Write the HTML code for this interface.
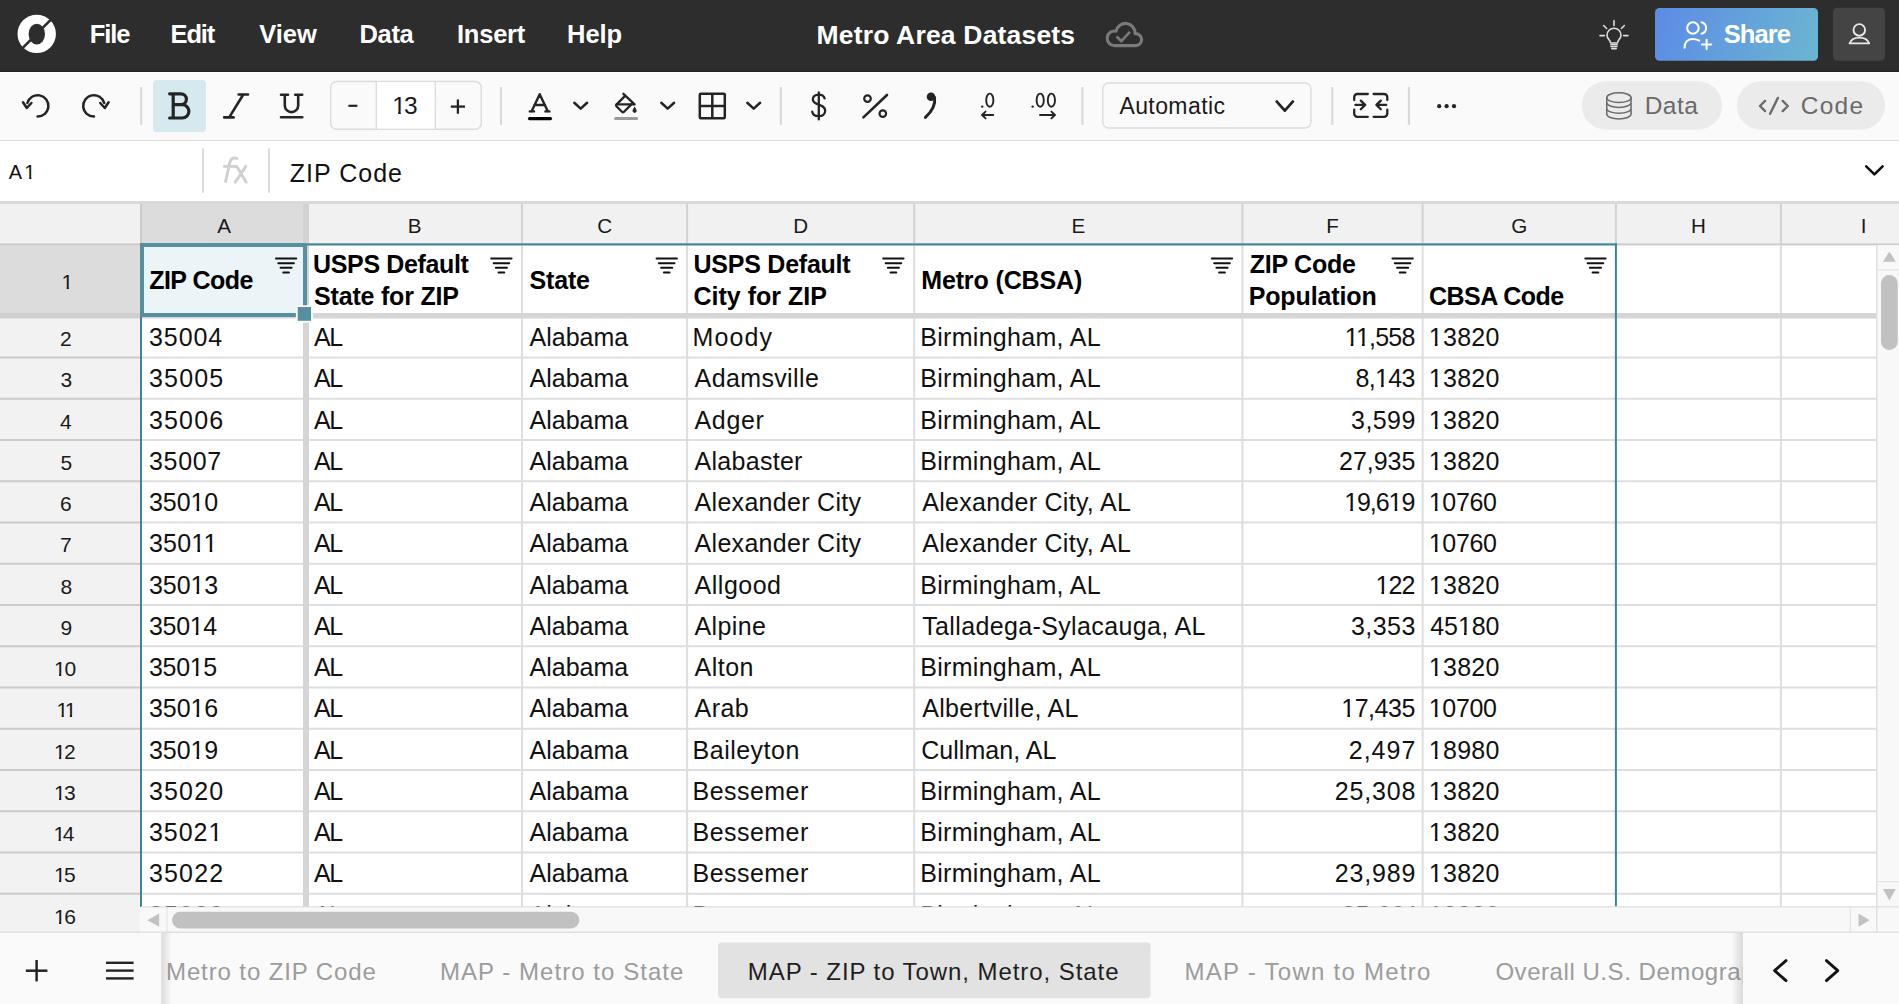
<!DOCTYPE html>
<html><head><meta charset="utf-8"><title>Metro Area Datasets</title>
<style>html,body{margin:0;padding:0;background:#fafafa;overflow:hidden;width:1899px;height:1004px}svg{display:block}text{font-family:"Liberation Sans",sans-serif}</style>
</head><body>
<svg width="1899" height="1004" viewBox="0 0 1899 1004" font-family="Liberation Sans, sans-serif"><rect x="0" y="0" width="1899" height="72" fill="#2d2d2d" />
<rect x="0" y="71" width="1899" height="1" fill="#202020" />
<g>
<circle cx="36.7" cy="33.9" r="19.2" fill="#fff"/>
<ellipse cx="36.8" cy="34.1" rx="8.2" ry="10.3" fill="#2d2d2d"/>
<line x1="19" y1="51.6" x2="54.4" y2="16.2" stroke="#2d2d2d" stroke-width="2.6"/>
</g>
<path d="M1114.5,45.6 A7.3,7.3 0 1 1 1116.12,31.18 A9.55,9.55 0 0 1 1135.03,33.63 A6,6 0 1 1 1135.6,45.6 Z" stroke="#7a7a7a" stroke-width="3.1" fill="none" stroke-linecap="round" stroke-linejoin="round" />
<path d="M1117.4,37.2 L1121.4,41.2 L1129.2,32.6" stroke="#7a7a7a" stroke-width="2.7" fill="none" stroke-linecap="round" stroke-linejoin="round" stroke-linecap="butt"/>
<line x1="1614" y1="20.8" x2="1614" y2="25.4" stroke="#dedede" stroke-width="1.6" stroke-linecap="round" />
<line x1="1603.6" y1="25.5" x2="1606.6" y2="28.5" stroke="#dedede" stroke-width="1.6" stroke-linecap="round" />
<line x1="1624.4" y1="25.5" x2="1621.4" y2="28.5" stroke="#dedede" stroke-width="1.6" stroke-linecap="round" />
<line x1="1600" y1="35.6" x2="1604.4" y2="35.6" stroke="#dedede" stroke-width="1.6" stroke-linecap="round" />
<line x1="1623.6" y1="35.6" x2="1628" y2="35.6" stroke="#dedede" stroke-width="1.6" stroke-linecap="round" />
<path d="M1610.6,43 C1610.4,40.2 1607,38.6 1607,35.2 A7,7 0 0 1 1621,35.2 C1621,38.6 1617.6,40.2 1617.4,43 Z" stroke="#dedede" stroke-width="1.6" fill="none" stroke-linecap="round" stroke-linejoin="round" />
<line x1="1610.8" y1="44.8" x2="1617.2" y2="44.8" stroke="#dedede" stroke-width="1.4" stroke-linecap="round" />
<line x1="1610.8" y1="46.6" x2="1617.2" y2="46.6" stroke="#dedede" stroke-width="1.4" stroke-linecap="round" />
<line x1="1611.8" y1="48.6" x2="1616.2" y2="48.6" stroke="#dedede" stroke-width="1.6" stroke-linecap="round" />
<defs><linearGradient id="sg" gradientUnits="userSpaceOnUse" x1="1655" y1="8" x2="1818" y2="61"><stop offset="0" stop-color="#5c8be6"/><stop offset="1" stop-color="#6bb6d1"/></linearGradient><linearGradient id="shL" x1="0" y1="0" x2="1" y2="0"><stop offset="0" stop-color="#000" stop-opacity="0"/><stop offset="1" stop-color="#000" stop-opacity="0.13"/></linearGradient><linearGradient id="shR" x1="0" y1="0" x2="1" y2="0"><stop offset="0" stop-color="#000" stop-opacity="0.13"/><stop offset="1" stop-color="#000" stop-opacity="0"/></linearGradient><clipPath id="rowhdr"><rect x="0" y="318" width="140" height="614"/></clipPath><clipPath id="grid16"><rect x="141" y="895" width="1735" height="11.5"/></clipPath><clipPath id="tabs"><rect x="162" y="933" width="1581" height="71"/></clipPath></defs>
<rect x="1655" y="8" width="163" height="52.8" fill="url(#sg)" rx="4.5" />
<circle cx="1692.9" cy="28" r="5.8" fill="none" stroke="#fff" stroke-width="2.1"/>
<path d="M1701.6,22.2 A6,6 0 0 1 1701.6,33.8" stroke="#fff" stroke-width="2.1" fill="none" stroke-linecap="round" stroke-linejoin="round" />
<path d="M1684.6,47.6 C1684.4,42.4 1687.6,39 1692.2,39 C1694.8,39 1697.2,39.5 1699.2,40.6" stroke="#fff" stroke-width="2.1" fill="none" stroke-linecap="round" stroke-linejoin="round" />
<line x1="1702" y1="44.5" x2="1711.2" y2="44.5" stroke="#fff" stroke-width="2.1" stroke-linecap="round" />
<line x1="1706.6" y1="39.9" x2="1706.6" y2="49.1" stroke="#fff" stroke-width="2.1" stroke-linecap="round" />
<rect x="1833" y="7.8" width="52" height="53" fill="#444444" rx="4.5" />
<circle cx="1859.3" cy="29.9" r="5.8" fill="none" stroke="#e8e8e8" stroke-width="1.9"/>
<path d="M1849.6,43.4 A10.2,8 0 0 1 1869.2,43.4 Z" stroke="#e8e8e8" stroke-width="1.9" fill="none" stroke-linecap="round" stroke-linejoin="round" />
<rect x="0" y="72" width="1899" height="1" fill="#ffffff" />
<rect x="0" y="73" width="1899" height="67" fill="#fafafa" />
<rect x="0" y="140" width="1899" height="1" fill="#dddddd" />
<path d="M37.6,116.6 A10.7,10.7 0 1 0 27.4,103" stroke="#242424" stroke-width="2.5" fill="none" stroke-linecap="round" stroke-linejoin="round" />
<path d="M23,102.2 L26.8,108 L31.4,103" stroke="#242424" stroke-width="2.5" fill="none" stroke-linecap="round" stroke-linejoin="round" />
<path d="M94,116.6 A10.7,10.7 0 1 1 104.2,103" stroke="#242424" stroke-width="2.5" fill="none" stroke-linecap="round" stroke-linejoin="round" />
<path d="M108.6,102.2 L104.8,108 L100.2,103" stroke="#242424" stroke-width="2.5" fill="none" stroke-linecap="round" stroke-linejoin="round" />
<rect x="140.2" y="87" width="2" height="38" fill="#d8d8d8" />
<rect x="500" y="87" width="2" height="38" fill="#d8d8d8" />
<rect x="779.8" y="87" width="2" height="38" fill="#d8d8d8" />
<rect x="1081.4" y="87" width="2" height="38" fill="#d8d8d8" />
<rect x="1331.3" y="87" width="2" height="38" fill="#d8d8d8" />
<rect x="1407.9" y="87" width="2" height="38" fill="#d8d8d8" />
<rect x="153" y="80" width="53" height="52" fill="#d6e9ef" rx="4" />
<path d="M169.6,93.8 L181,93.8 A5.4,5.4 0 0 1 181,104.6 L173.2,104.6 M173.2,93.8 L173.2,118 M169.6,118 L182.2,118 A6.7,6.7 0 0 0 182.2,104.6" stroke="#242424" stroke-width="3.2" fill="none" stroke-linecap="round" stroke-linejoin="round" />
<path d="M238.6,94.5 L248,94.5 M243.3,94.5 L229.2,117.4 M224.2,117.4 L233.6,117.4" stroke="#242424" stroke-width="2.6" fill="none" stroke-linecap="round" stroke-linejoin="round" />
<path d="M281,94.7 L288,94.7 M295.2,94.7 L302.2,94.7 M284.8,94.7 L284.8,105.4 A6.7,6.7 0 0 0 298.2,105.4 L298.2,94.7 M281,117.2 L302.3,117.2" stroke="#242424" stroke-width="2.6" fill="none" stroke-linecap="round" stroke-linejoin="round" />
<rect x="330.7" y="81.5" width="150.5" height="47.7" fill="#fafafa" rx="6" stroke="#dcdcdc" stroke-width="1.4"/>
<rect x="376.3" y="82.2" width="59" height="46.3" fill="#ffffff" />
<rect x="375.6" y="82" width="1.4" height="47" fill="#dcdcdc" />
<rect x="434.6" y="82" width="1.4" height="47" fill="#dcdcdc" />
<line x1="348.4" y1="105.8" x2="357.4" y2="105.8" stroke="#242424" stroke-width="2.2" stroke-linecap="butt" />
<line x1="450.8" y1="106.6" x2="465" y2="106.6" stroke="#242424" stroke-width="2.3" stroke-linecap="butt" />
<line x1="457.9" y1="99.5" x2="457.9" y2="113.7" stroke="#242424" stroke-width="2.3" stroke-linecap="butt" />
<path d="M531.5,111.4 L539.7,94.2 L547.9,111.4 M534.4,105 L545,105 M529.8,111.4 L534,111.4 M545.4,111.4 L549.4,111.4" stroke="#242424" stroke-width="2.4" fill="none" stroke-linecap="round" stroke-linejoin="round" />
<line x1="529.5" y1="118.6" x2="550.5" y2="118.6" stroke="#000" stroke-width="3.2" stroke-linecap="round" />
<path d="M574.3000000000001,102.8 L580.7,108.6 L587.1,102.8" stroke="#242424" stroke-width="2.5" fill="none" stroke-linecap="round" stroke-linejoin="round" />
<path d="M661.3000000000001,102.8 L667.7,108.6 L674.1,102.8" stroke="#242424" stroke-width="2.5" fill="none" stroke-linecap="round" stroke-linejoin="round" />
<path d="M747.3000000000001,102.8 L753.7,108.6 L760.1,102.8" stroke="#242424" stroke-width="2.5" fill="none" stroke-linecap="round" stroke-linejoin="round" />
<path d="M623.4,93.8 L634.6,104.4 L616.6,104.4" stroke="#242424" stroke-width="2.3" fill="none" stroke-linecap="round" stroke-linejoin="round" />
<path d="M624.6,96.4 L616.4,104.6 A1.2,1.2 0 0 0 616.4,106.2 L622.2,112 A1.2,1.2 0 0 0 623.8,112 L631.4,104.4" stroke="#242424" stroke-width="2.3" fill="none" stroke-linecap="round" stroke-linejoin="round" />
<path d="M634.6,107.4 C633.6,109 633,110 633,110.8 A1.6,1.6 0 0 0 636.2,110.8 C636.2,110 635.6,109 634.6,107.4 Z" stroke="#242424" stroke-width="1" fill="#242424" stroke-linecap="round" stroke-linejoin="round" />
<line x1="615.6" y1="118.5" x2="636.6" y2="118.5" stroke="#9a9a9a" stroke-width="3" stroke-linecap="round" />
<rect x="699.8" y="93.8" width="25" height="24.5" fill="none" rx="1" stroke="#242424" stroke-width="2.5"/>
<line x1="712.3" y1="93.8" x2="712.3" y2="118.3" stroke="#242424" stroke-width="2.5" stroke-linecap="butt" />
<line x1="699.8" y1="106" x2="724.8" y2="106" stroke="#242424" stroke-width="2.5" stroke-linecap="butt" />
<path d="M824.6,98.4 C824,95.6 821.6,94.6 818.8,94.6 C815.2,94.6 812.8,96.6 812.8,99.6 C812.8,106 825.2,103.4 825.2,110.8 C825.2,114.2 822.4,116.2 818.8,116.2 C815.4,116.2 812.6,114.8 812.2,111.6 M818.8,92.4 L818.8,119.4" stroke="#242424" stroke-width="2.3" fill="none" stroke-linecap="round" stroke-linejoin="round" />
<path d="M863.4,117.4 L887,95" stroke="#242424" stroke-width="2.6" fill="none" stroke-linecap="round" stroke-linejoin="round" />
<circle cx="867.5" cy="98.6" r="3.3" fill="none" stroke="#242424" stroke-width="2.2"/>
<circle cx="882.8" cy="113.6" r="3.3" fill="none" stroke="#242424" stroke-width="2.2"/>
<circle cx="931" cy="96.8" r="4.3" fill="#242424"/>
<path d="M934.6,97.4 C935.6,104.4 932,111.4 925.4,117.4" stroke="#242424" stroke-width="2.9" fill="none" stroke-linecap="round" stroke-linejoin="round" />
<circle cx="982.2" cy="106.6" r="1.2" fill="#242424"/>
<ellipse cx="989.8" cy="100.2" rx="3.6" ry="6.6" fill="none" stroke="#242424" stroke-width="1.9"/>
<path d="M982,115 L993.2,115 M985.6,111.6 L982,115 L985.6,118.4" stroke="#242424" stroke-width="1.9" fill="none" stroke-linecap="round" stroke-linejoin="round" />
<circle cx="1032.6" cy="106.6" r="1.2" fill="#242424"/>
<ellipse cx="1040.2" cy="100.2" rx="3.6" ry="6.6" fill="none" stroke="#242424" stroke-width="1.9"/>
<ellipse cx="1051.4" cy="100.2" rx="3.6" ry="6.6" fill="none" stroke="#242424" stroke-width="1.9"/>
<path d="M1040,115 L1055,115 M1051.4,111.6 L1055,115 L1051.4,118.4" stroke="#242424" stroke-width="1.9" fill="none" stroke-linecap="round" stroke-linejoin="round" />
<rect x="1102.8" y="83" width="208.2" height="45" fill="#fafafa" rx="6" stroke="#dcdcdc" stroke-width="1.4"/>
<path d="M1276.8,101.6 L1284.8,110.6 L1292.8,101.6" stroke="#242424" stroke-width="2.8" fill="none" stroke-linecap="round" stroke-linejoin="round" />
<path d="M1367.8,94 L1357.4,94 A3.2,3.2 0 0 0 1354.2,97.2 L1354.2,100.1 M1354.2,109.7 L1354.2,113.6 A3.2,3.2 0 0 0 1357.4,116.8 L1367.8,116.8" stroke="#242424" stroke-width="2.3" fill="none" stroke-linecap="round" stroke-linejoin="round" />
<path d="M1373.6,94 L1384.1,94 A3.2,3.2 0 0 1 1387.3,97.2 L1387.3,100.1 M1387.3,109.7 L1387.3,113.6 A3.2,3.2 0 0 1 1384.1,116.8 L1373.6,116.8" stroke="#242424" stroke-width="2.3" fill="none" stroke-linecap="round" stroke-linejoin="round" />
<path d="M1355.4,104.9 L1365.2,104.9 M1360.8,100.6 L1365.2,104.9 L1360.8,109.2" stroke="#242424" stroke-width="2.3" fill="none" stroke-linecap="round" stroke-linejoin="round" />
<path d="M1386.2,104.9 L1376.4,104.9 M1380.8,100.6 L1376.4,104.9 L1380.8,109.2" stroke="#242424" stroke-width="2.3" fill="none" stroke-linecap="round" stroke-linejoin="round" />
<circle cx="1439.2" cy="106.2" r="2.1" fill="#242424"/>
<circle cx="1446.6" cy="106.2" r="2.1" fill="#242424"/>
<circle cx="1454" cy="106.2" r="2.1" fill="#242424"/>
<rect x="1581.8" y="81.2" width="140.3" height="48.5" fill="#ebebeb" rx="24.2" />
<rect x="1736.8" y="81.2" width="148.2" height="48.5" fill="#ebebeb" rx="24.2" />
<ellipse cx="1618.9" cy="97.7" rx="12.15" ry="4.9" fill="none" stroke="#6a6a6a" stroke-width="1.5"/>
<path d="M1606.75,97.7 L1606.75,114 A12.15,4.9 0 0 0 1631.05,114 L1631.05,97.7 M1606.75,102.6 A12.15,4.9 0 0 0 1631.05,102.6 M1606.75,108.4 A12.15,4.9 0 0 0 1631.05,108.4" stroke="#6a6a6a" stroke-width="1.5" fill="none" stroke-linecap="round" stroke-linejoin="round" />
<path d="M1765.1,100.9 L1760,106 L1765.1,111.1 M1782.7,100.9 L1787.8,106 L1782.7,111.1 M1777.9,97.9 L1770.1,113.8" stroke="#6c6c6c" stroke-width="2.4" fill="none" stroke-linecap="round" stroke-linejoin="round" />
<rect x="0" y="141" width="1899" height="60" fill="#ffffff" />
<rect x="202" y="148.4" width="2" height="44.3" fill="#dcdcdc" />
<rect x="268" y="148.4" width="2" height="44.3" fill="#dcdcdc" />
<path d="M1866.2,166.4 L1874.4,174.4 L1882.6,166.4" stroke="#111" stroke-width="2.6" fill="none" stroke-linecap="round" stroke-linejoin="round" />
<path d="M236.8,158.4 C234,157.4 230.8,158 229.8,162.4 L225.6,181.6" stroke="#d0d0d0" stroke-width="2.9" fill="none" stroke-linecap="round" stroke-linejoin="round" stroke-linecap="butt"/>
<line x1="223.2" y1="166.4" x2="236.4" y2="166.4" stroke="#d0d0d0" stroke-width="2.9" stroke-linecap="butt" />
<path d="M236.8,166.4 L246.2,182.2 M245.8,166.4 L235.2,182.2" stroke="#d0d0d0" stroke-width="2.9" fill="none" stroke-linecap="round" stroke-linejoin="round" stroke-linecap="butt"/>
<rect x="0" y="201" width="1899" height="3" fill="#d9d9d9" />
<rect x="0" y="204" width="1899" height="39" fill="#f1f1f1" />
<rect x="141" y="204" width="162" height="39" fill="#dcdcdc" />
<rect x="0" y="243" width="140" height="689" fill="#f2f2f2" />
<rect x="0" y="245" width="140" height="68" fill="#dcdcdc" />
<rect x="141" y="245" width="1735" height="662" fill="#ffffff" />
<rect x="141" y="245" width="162" height="68" fill="#ebf4f7" />
<rect x="521.0" y="204" width="2" height="39.5" fill="#d2d2d2" />
<rect x="686.1" y="204" width="2" height="39.5" fill="#d2d2d2" />
<rect x="913.2" y="204" width="2" height="39.5" fill="#d2d2d2" />
<rect x="1241.4" y="204" width="2" height="39.5" fill="#d2d2d2" />
<rect x="1421.6" y="204" width="2" height="39.5" fill="#d2d2d2" />
<rect x="1779.9" y="204" width="2" height="39.5" fill="#d2d2d2" />
<rect x="1614.9" y="204" width="2" height="39.5" fill="#d2d2d2" />
<rect x="303" y="204" width="6" height="39.5" fill="#d3d3d3" />
<rect x="140" y="204" width="2" height="39.5" fill="#cbcbcb" />
<rect x="0" y="243.4" width="1899" height="2" fill="#cacaca" />
<rect x="521.0" y="245" width="2" height="662" fill="#dedede" />
<rect x="686.1" y="245" width="2" height="662" fill="#dedede" />
<rect x="913.2" y="245" width="2" height="662" fill="#dedede" />
<rect x="1241.4" y="245" width="2" height="662" fill="#dedede" />
<rect x="1421.6" y="245" width="2" height="662" fill="#dedede" />
<rect x="1779.9" y="245" width="2" height="662" fill="#dedede" />
<rect x="141" y="356.5" width="1735" height="2" fill="#dedede" />
<rect x="0" y="356.5" width="140" height="2" fill="#cbcbcb" />
<rect x="141" y="397.75" width="1735" height="2" fill="#dedede" />
<rect x="0" y="397.75" width="140" height="2" fill="#cbcbcb" />
<rect x="141" y="439.0" width="1735" height="2" fill="#dedede" />
<rect x="0" y="439.0" width="140" height="2" fill="#cbcbcb" />
<rect x="141" y="480.25" width="1735" height="2" fill="#dedede" />
<rect x="0" y="480.25" width="140" height="2" fill="#cbcbcb" />
<rect x="141" y="521.5" width="1735" height="2" fill="#dedede" />
<rect x="0" y="521.5" width="140" height="2" fill="#cbcbcb" />
<rect x="141" y="562.75" width="1735" height="2" fill="#dedede" />
<rect x="0" y="562.75" width="140" height="2" fill="#cbcbcb" />
<rect x="141" y="604.0" width="1735" height="2" fill="#dedede" />
<rect x="0" y="604.0" width="140" height="2" fill="#cbcbcb" />
<rect x="141" y="645.25" width="1735" height="2" fill="#dedede" />
<rect x="0" y="645.25" width="140" height="2" fill="#cbcbcb" />
<rect x="141" y="686.5" width="1735" height="2" fill="#dedede" />
<rect x="0" y="686.5" width="140" height="2" fill="#cbcbcb" />
<rect x="141" y="727.75" width="1735" height="2" fill="#dedede" />
<rect x="0" y="727.75" width="140" height="2" fill="#cbcbcb" />
<rect x="141" y="769.0" width="1735" height="2" fill="#dedede" />
<rect x="0" y="769.0" width="140" height="2" fill="#cbcbcb" />
<rect x="141" y="810.25" width="1735" height="2" fill="#dedede" />
<rect x="0" y="810.25" width="140" height="2" fill="#cbcbcb" />
<rect x="141" y="851.5" width="1735" height="2" fill="#dedede" />
<rect x="0" y="851.5" width="140" height="2" fill="#cbcbcb" />
<rect x="141" y="892.75" width="1735" height="2" fill="#dedede" />
<rect x="0" y="892.75" width="140" height="2" fill="#cbcbcb" />
<rect x="0" y="934.0" width="140" height="2" fill="#cbcbcb" />
<rect x="141" y="313" width="1735" height="5.5" fill="#d5d5d5" />
<rect x="0" y="313" width="140" height="5.5" fill="#cfcfcf" />
<rect x="303" y="245" width="6" height="662" fill="#d5d5d5" />
<rect x="140" y="243.4" width="1477" height="2" fill="#3e8398" />
<rect x="140" y="243.4" width="2" height="663.6" fill="#3e8398" />
<rect x="1614.9" y="243.4" width="2" height="663.6" fill="#3e8398" />
<rect x="140" y="243" width="167" height="4" fill="#568f9f" />
<rect x="140" y="243" width="4" height="74" fill="#568f9f" />
<rect x="303" y="243" width="4" height="74" fill="#568f9f" />
<rect x="140" y="313" width="167" height="4" fill="#568f9f" />
<rect x="295.9" y="305.3" width="16.9" height="17.3" fill="#ffffff" />
<rect x="297.7" y="307" width="13.3" height="13.8" fill="#568f9f" />
<line x1="275.95000000000005" y1="258.6" x2="296.25" y2="258.6" stroke="#111" stroke-width="2" stroke-linecap="round" />
<line x1="278.3" y1="263.3" x2="293.90000000000003" y2="263.3" stroke="#111" stroke-width="2" stroke-linecap="round" />
<line x1="280.55" y1="267.8" x2="291.65000000000003" y2="267.8" stroke="#111" stroke-width="2" stroke-linecap="round" />
<line x1="283.25" y1="272.5" x2="288.95000000000005" y2="272.5" stroke="#111" stroke-width="2" stroke-linecap="round" />
<line x1="491.25" y1="258.6" x2="511.54999999999995" y2="258.6" stroke="#111" stroke-width="2" stroke-linecap="round" />
<line x1="493.59999999999997" y1="263.3" x2="509.2" y2="263.3" stroke="#111" stroke-width="2" stroke-linecap="round" />
<line x1="495.84999999999997" y1="267.8" x2="506.95" y2="267.8" stroke="#111" stroke-width="2" stroke-linecap="round" />
<line x1="498.54999999999995" y1="272.5" x2="504.25" y2="272.5" stroke="#111" stroke-width="2" stroke-linecap="round" />
<line x1="656.5500000000001" y1="258.6" x2="676.85" y2="258.6" stroke="#111" stroke-width="2" stroke-linecap="round" />
<line x1="658.9000000000001" y1="263.3" x2="674.5" y2="263.3" stroke="#111" stroke-width="2" stroke-linecap="round" />
<line x1="661.1500000000001" y1="267.8" x2="672.25" y2="267.8" stroke="#111" stroke-width="2" stroke-linecap="round" />
<line x1="663.85" y1="272.5" x2="669.5500000000001" y2="272.5" stroke="#111" stroke-width="2" stroke-linecap="round" />
<line x1="883.25" y1="258.6" x2="903.55" y2="258.6" stroke="#111" stroke-width="2" stroke-linecap="round" />
<line x1="885.6" y1="263.3" x2="901.1999999999999" y2="263.3" stroke="#111" stroke-width="2" stroke-linecap="round" />
<line x1="887.85" y1="267.8" x2="898.9499999999999" y2="267.8" stroke="#111" stroke-width="2" stroke-linecap="round" />
<line x1="890.55" y1="272.5" x2="896.25" y2="272.5" stroke="#111" stroke-width="2" stroke-linecap="round" />
<line x1="1211.85" y1="258.6" x2="1232.15" y2="258.6" stroke="#111" stroke-width="2" stroke-linecap="round" />
<line x1="1214.2" y1="263.3" x2="1229.8" y2="263.3" stroke="#111" stroke-width="2" stroke-linecap="round" />
<line x1="1216.45" y1="267.8" x2="1227.55" y2="267.8" stroke="#111" stroke-width="2" stroke-linecap="round" />
<line x1="1219.15" y1="272.5" x2="1224.85" y2="272.5" stroke="#111" stroke-width="2" stroke-linecap="round" />
<line x1="1392.4499999999998" y1="258.6" x2="1412.75" y2="258.6" stroke="#111" stroke-width="2" stroke-linecap="round" />
<line x1="1394.8" y1="263.3" x2="1410.3999999999999" y2="263.3" stroke="#111" stroke-width="2" stroke-linecap="round" />
<line x1="1397.05" y1="267.8" x2="1408.1499999999999" y2="267.8" stroke="#111" stroke-width="2" stroke-linecap="round" />
<line x1="1399.75" y1="272.5" x2="1405.4499999999998" y2="272.5" stroke="#111" stroke-width="2" stroke-linecap="round" />
<line x1="1585.3" y1="258.6" x2="1605.6000000000001" y2="258.6" stroke="#111" stroke-width="2" stroke-linecap="round" />
<line x1="1587.65" y1="263.3" x2="1603.25" y2="263.3" stroke="#111" stroke-width="2" stroke-linecap="round" />
<line x1="1589.9" y1="267.8" x2="1601.0" y2="267.8" stroke="#111" stroke-width="2" stroke-linecap="round" />
<line x1="1592.6000000000001" y1="272.5" x2="1598.3" y2="272.5" stroke="#111" stroke-width="2" stroke-linecap="round" />
<rect x="1876" y="245" width="23" height="662" fill="#f8f8f8" />
<rect x="1876" y="245" width="1.5" height="687" fill="#e0e0e0" />
<rect x="1876" y="269.5" width="23" height="1.2" fill="#e4e4e4" />
<path d="M1883,261.8 L1889.4,251.4 L1895.8,261.8 Z" stroke="none" stroke-width="2" fill="#c2c2c2" stroke-linecap="round" stroke-linejoin="round" />
<rect x="1881" y="275" width="16.7" height="75" fill="#c1c1c1" rx="8.3" />
<rect x="1876" y="881" width="23" height="1.2" fill="#e4e4e4" />
<path d="M1883,889 L1889.4,900.6 L1895.8,889 Z" stroke="none" stroke-width="2" fill="#c2c2c2" stroke-linecap="round" stroke-linejoin="round" />
<rect x="141" y="907" width="1758" height="25" fill="#f8f8f8" />
<rect x="141" y="906.2" width="1758" height="1.2" fill="#dedede" />
<rect x="166.4" y="907" width="1.2" height="25" fill="#e4e4e4" />
<path d="M159.2,913.6 L147.3,920.2 L159.2,926.7 Z" stroke="none" stroke-width="2" fill="#c2c2c2" stroke-linecap="round" stroke-linejoin="round" />
<rect x="172" y="911.8" width="407.3" height="16.6" fill="#c1c1c1" rx="8.3" />
<rect x="1849.8" y="907" width="1.2" height="25" fill="#e4e4e4" />
<path d="M1858.5,913.6 L1869.7,920.2 L1858.5,926.7 Z" stroke="none" stroke-width="2" fill="#c2c2c2" stroke-linecap="round" stroke-linejoin="round" />
<rect x="1876" y="907" width="1.5" height="25" fill="#e0e0e0" />
<rect x="0" y="932" width="1899" height="72" fill="#fafafa" />
<rect x="0" y="931.6" width="1899" height="1.2" fill="#d9d9d9" />
<line x1="25.8" y1="970.7" x2="47.4" y2="970.7" stroke="#242424" stroke-width="2.5" stroke-linecap="butt" />
<line x1="36.6" y1="960" x2="36.6" y2="981.4" stroke="#242424" stroke-width="2.5" stroke-linecap="butt" />
<line x1="106" y1="962.8" x2="133.6" y2="962.8" stroke="#242424" stroke-width="2.4" stroke-linecap="butt" />
<line x1="106" y1="970.6" x2="133.6" y2="970.6" stroke="#242424" stroke-width="2.4" stroke-linecap="butt" />
<line x1="106" y1="978.4" x2="133.6" y2="978.4" stroke="#242424" stroke-width="2.4" stroke-linecap="butt" />
<rect x="718" y="942.6" width="432.6" height="55.6" fill="#e2e2e2" rx="4" />
<text x="89.80" y="43.20" font-size="25.5" fill="#fff" font-weight="700" letter-spacing="-1.115">File</text>
<text x="170.60" y="43.20" font-size="25.5" fill="#fff" font-weight="700" letter-spacing="-1.156">Edit</text>
<text x="259.20" y="43.20" font-size="25.5" fill="#fff" font-weight="700">View</text>
<text x="359.60" y="43.20" font-size="25.5" fill="#fff" font-weight="700" letter-spacing="-0.396">Data</text>
<text x="457.00" y="43.20" font-size="25.5" fill="#fff" font-weight="700" letter-spacing="-0.230">Insert</text>
<text x="567.00" y="43.20" font-size="25.5" fill="#fff" font-weight="700" letter-spacing="-0.027">Help</text>
<text x="816.50" y="44.20" font-size="26.5" fill="#fff" font-weight="700" letter-spacing="0.182">Metro Area Datasets</text>
<text x="1723.70" y="43.40" font-size="25.5" fill="#fff" font-weight="700" letter-spacing="-0.898">Share</text>
<text x="392.21" y="113.90" font-size="24.5" fill="#1a1a1a" letter-spacing="-1.935">13</text>
<rect x="393.38" y="111.37" width="4.79" height="3.23" fill="#ffffff"/>
<rect x="400.74" y="111.37" width="4.60" height="3.23" fill="#ffffff"/>
<text x="1119.40" y="114.00" font-size="23" fill="#1a1a1a" letter-spacing="0.417">Automatic</text>
<text x="1644.70" y="113.80" font-size="24.5" fill="#6a6a6a" letter-spacing="0.458">Data</text>
<text x="1800.80" y="113.80" font-size="24.5" fill="#6a6a6a" letter-spacing="1.218">Code</text>
<text x="8.80" y="178.70" font-size="20" fill="#111" letter-spacing="2.210">A1</text>
<rect x="25.17" y="176.51" width="4.01" height="2.89" fill="#ffffff"/>
<rect x="31.35" y="176.51" width="3.85" height="2.89" fill="#ffffff"/>
<text x="289.80" y="181.60" font-size="25" fill="#111" letter-spacing="1.000">ZIP Code</text>
<text x="217.20" y="232.90" font-size="20.6" fill="#1a1a1a">A</text>
<text x="407.80" y="232.90" font-size="20.6" fill="#1a1a1a">B</text>
<text x="597.20" y="232.90" font-size="20.6" fill="#1a1a1a">C</text>
<text x="793.30" y="232.90" font-size="20.6" fill="#1a1a1a">D</text>
<text x="1071.60" y="232.90" font-size="20.6" fill="#1a1a1a">E</text>
<text x="1326.30" y="232.90" font-size="20.6" fill="#1a1a1a">F</text>
<text x="1511.20" y="232.90" font-size="20.6" fill="#1a1a1a">G</text>
<text x="1691.10" y="232.90" font-size="20.6" fill="#1a1a1a">H</text>
<text x="1860.80" y="232.90" font-size="20.6" fill="#1a1a1a">I</text>
<text x="149.20" y="288.70" font-size="25" fill="#000" font-weight="700" letter-spacing="-0.519">ZIP Code</text>
<text x="313.10" y="272.80" font-size="25" fill="#000" font-weight="700" letter-spacing="-0.357">USPS Default</text>
<text x="314.10" y="304.60" font-size="25" fill="#000" font-weight="700" letter-spacing="-0.197">State for ZIP</text>
<text x="529.60" y="289.00" font-size="25" fill="#000" font-weight="700" letter-spacing="-0.182">State</text>
<text x="693.50" y="272.80" font-size="25" fill="#000" font-weight="700" letter-spacing="-0.239">USPS Default</text>
<text x="693.50" y="304.70" font-size="25" fill="#000" font-weight="700">City for ZIP</text>
<text x="921.20" y="289.00" font-size="25" fill="#000" font-weight="700" letter-spacing="-0.124">Metro (CBSA)</text>
<text x="1249.70" y="272.90" font-size="25" fill="#000" font-weight="700" letter-spacing="-0.248">ZIP Code</text>
<text x="1248.70" y="304.70" font-size="25" fill="#000" font-weight="700" letter-spacing="-0.131">Population</text>
<text x="1429.00" y="304.90" font-size="25" fill="#000" font-weight="700" letter-spacing="-0.535">CBSA Code</text>
<text x="61.55" y="289.30" font-size="21" fill="#1a1a1a">1</text>
<rect x="62.45" y="287.03" width="4.18" height="2.97" fill="#dcdcdc"/>
<rect x="68.89" y="287.03" width="4.02" height="2.97" fill="#dcdcdc"/>
<text x="60.00" y="346.00" font-size="21" fill="#1a1a1a" clip-path="url(#rowhdr)">2</text>
<text x="60.50" y="387.25" font-size="21" fill="#1a1a1a" clip-path="url(#rowhdr)">3</text>
<text x="60.00" y="428.50" font-size="21" fill="#1a1a1a" clip-path="url(#rowhdr)">4</text>
<text x="60.50" y="469.75" font-size="21" fill="#1a1a1a" clip-path="url(#rowhdr)">5</text>
<text x="60.00" y="511.00" font-size="21" fill="#1a1a1a" clip-path="url(#rowhdr)">6</text>
<text x="60.00" y="552.25" font-size="21" fill="#1a1a1a" clip-path="url(#rowhdr)">7</text>
<text x="60.50" y="593.50" font-size="21" fill="#1a1a1a" clip-path="url(#rowhdr)">8</text>
<text x="60.50" y="634.75" font-size="21" fill="#1a1a1a" clip-path="url(#rowhdr)">9</text>
<text x="53.95" y="676.00" font-size="21" fill="#1a1a1a" letter-spacing="-1.059" clip-path="url(#rowhdr)">10</text>
<rect x="54.85" y="673.73" width="4.18" height="2.97" fill="#f2f2f2" clip-path="url(#rowhdr)"/>
<rect x="61.29" y="673.73" width="4.02" height="2.97" fill="#f2f2f2" clip-path="url(#rowhdr)"/>
<text x="56.49" y="717.25" font-size="21" fill="#1a1a1a" letter-spacing="-1.883" clip-path="url(#rowhdr)">11</text>
<rect x="57.39" y="714.98" width="4.18" height="2.97" fill="#f2f2f2" clip-path="url(#rowhdr)"/>
<rect x="63.82" y="714.98" width="4.02" height="2.97" fill="#f2f2f2" clip-path="url(#rowhdr)"/>
<rect x="65.63" y="714.98" width="4.18" height="2.97" fill="#f2f2f2" clip-path="url(#rowhdr)"/>
<rect x="72.06" y="714.98" width="4.02" height="2.97" fill="#f2f2f2" clip-path="url(#rowhdr)"/>
<text x="53.95" y="758.50" font-size="21" fill="#1a1a1a" letter-spacing="-1.659" clip-path="url(#rowhdr)">12</text>
<rect x="54.85" y="756.23" width="4.18" height="2.97" fill="#f2f2f2" clip-path="url(#rowhdr)"/>
<rect x="61.29" y="756.23" width="4.02" height="2.97" fill="#f2f2f2" clip-path="url(#rowhdr)"/>
<text x="53.95" y="799.75" font-size="21" fill="#1a1a1a" letter-spacing="-1.659" clip-path="url(#rowhdr)">13</text>
<rect x="54.85" y="797.48" width="4.18" height="2.97" fill="#f2f2f2" clip-path="url(#rowhdr)"/>
<rect x="61.29" y="797.48" width="4.02" height="2.97" fill="#f2f2f2" clip-path="url(#rowhdr)"/>
<text x="53.45" y="841.00" font-size="21" fill="#1a1a1a" letter-spacing="-2.259" clip-path="url(#rowhdr)">14</text>
<rect x="54.35" y="838.73" width="4.18" height="2.97" fill="#f2f2f2" clip-path="url(#rowhdr)"/>
<rect x="60.79" y="838.73" width="4.02" height="2.97" fill="#f2f2f2" clip-path="url(#rowhdr)"/>
<text x="53.95" y="882.25" font-size="21" fill="#1a1a1a" letter-spacing="-1.659" clip-path="url(#rowhdr)">15</text>
<rect x="54.85" y="879.98" width="4.18" height="2.97" fill="#f2f2f2" clip-path="url(#rowhdr)"/>
<rect x="61.29" y="879.98" width="4.02" height="2.97" fill="#f2f2f2" clip-path="url(#rowhdr)"/>
<text x="53.95" y="923.50" font-size="21" fill="#1a1a1a" letter-spacing="-1.459" clip-path="url(#rowhdr)">16</text>
<rect x="54.85" y="921.23" width="4.18" height="2.97" fill="#f2f2f2" clip-path="url(#rowhdr)"/>
<rect x="61.29" y="921.23" width="4.02" height="2.97" fill="#f2f2f2" clip-path="url(#rowhdr)"/>
<text x="149.00" y="346.00" font-size="25" fill="#111" letter-spacing="0.921">35004</text>
<text x="314.00" y="346.00" font-size="25" fill="#111" letter-spacing="-1.475">AL</text>
<text x="529.50" y="346.00" font-size="25" fill="#111">Alabama</text>
<text x="692.60" y="346.00" font-size="25" fill="#111" letter-spacing="1.116">Moody</text>
<text x="920.20" y="346.00" font-size="25" fill="#111" letter-spacing="0.305">Birmingham, AL</text>
<text x="1344.70" y="346.00" font-size="25" fill="#111" letter-spacing="-0.801">11,558</text>
<rect x="1345.90" y="343.43" width="4.88" height="3.27" fill="#ffffff"/>
<rect x="1353.40" y="343.43" width="4.69" height="3.27" fill="#ffffff"/>
<rect x="1357.15" y="343.43" width="4.88" height="3.27" fill="#ffffff"/>
<rect x="1364.64" y="343.43" width="4.69" height="3.27" fill="#ffffff"/>
<text x="1428.80" y="346.00" font-size="25" fill="#111" letter-spacing="0.271">13820</text>
<rect x="1430.00" y="343.43" width="4.88" height="3.27" fill="#ffffff"/>
<rect x="1437.50" y="343.43" width="4.69" height="3.27" fill="#ffffff"/>
<text x="149.00" y="387.25" font-size="25" fill="#111" letter-spacing="1.171">35005</text>
<text x="314.00" y="387.25" font-size="25" fill="#111" letter-spacing="-1.475">AL</text>
<text x="529.50" y="387.25" font-size="25" fill="#111">Alabama</text>
<text x="694.60" y="387.25" font-size="25" fill="#111" letter-spacing="0.370">Adamsville</text>
<text x="920.20" y="387.25" font-size="25" fill="#111" letter-spacing="0.305">Birmingham, AL</text>
<text x="1355.50" y="387.25" font-size="25" fill="#111" letter-spacing="-0.689">8,143</text>
<rect x="1376.18" y="384.68" width="4.88" height="3.27" fill="#ffffff"/>
<rect x="1383.67" y="384.68" width="4.69" height="3.27" fill="#ffffff"/>
<text x="1428.80" y="387.25" font-size="25" fill="#111" letter-spacing="0.271">13820</text>
<rect x="1430.00" y="384.68" width="4.88" height="3.27" fill="#ffffff"/>
<rect x="1437.50" y="384.68" width="4.69" height="3.27" fill="#ffffff"/>
<text x="149.00" y="428.50" font-size="25" fill="#111" letter-spacing="1.146">35006</text>
<text x="314.00" y="428.50" font-size="25" fill="#111" letter-spacing="-1.475">AL</text>
<text x="529.50" y="428.50" font-size="25" fill="#111">Alabama</text>
<text x="694.60" y="428.50" font-size="25" fill="#111" letter-spacing="0.603">Adger</text>
<text x="920.20" y="428.50" font-size="25" fill="#111" letter-spacing="0.305">Birmingham, AL</text>
<text x="1351.10" y="428.50" font-size="25" fill="#111" letter-spacing="0.411">3,599</text>
<text x="1428.80" y="428.50" font-size="25" fill="#111" letter-spacing="0.271">13820</text>
<rect x="1430.00" y="425.93" width="4.88" height="3.27" fill="#ffffff"/>
<rect x="1437.50" y="425.93" width="4.69" height="3.27" fill="#ffffff"/>
<text x="149.00" y="469.75" font-size="25" fill="#111" letter-spacing="0.671">35007</text>
<text x="314.00" y="469.75" font-size="25" fill="#111" letter-spacing="-1.475">AL</text>
<text x="529.50" y="469.75" font-size="25" fill="#111">Alabama</text>
<text x="694.60" y="469.75" font-size="25" fill="#111" letter-spacing="0.276">Alabaster</text>
<text x="920.20" y="469.75" font-size="25" fill="#111" letter-spacing="0.305">Birmingham, AL</text>
<text x="1339.10" y="469.75" font-size="25" fill="#111" letter-spacing="-0.052">27,935</text>
<text x="1428.80" y="469.75" font-size="25" fill="#111" letter-spacing="0.271">13820</text>
<rect x="1430.00" y="467.18" width="4.88" height="3.27" fill="#ffffff"/>
<rect x="1437.50" y="467.18" width="4.69" height="3.27" fill="#ffffff"/>
<text x="149.00" y="511.00" font-size="25" fill="#111" letter-spacing="-0.079">35010</text>
<rect x="191.68" y="508.43" width="4.88" height="3.27" fill="#ffffff"/>
<rect x="199.17" y="508.43" width="4.69" height="3.27" fill="#ffffff"/>
<text x="314.00" y="511.00" font-size="25" fill="#111" letter-spacing="-1.475">AL</text>
<text x="529.50" y="511.00" font-size="25" fill="#111">Alabama</text>
<text x="694.60" y="511.00" font-size="25" fill="#111" letter-spacing="0.294">Alexander City</text>
<text x="922.20" y="511.00" font-size="25" fill="#111" letter-spacing="0.283">Alexander City, AL</text>
<text x="1344.20" y="511.00" font-size="25" fill="#111" letter-spacing="-1.072">19,619</text>
<rect x="1345.40" y="508.43" width="4.88" height="3.27" fill="#ffffff"/>
<rect x="1352.90" y="508.43" width="4.69" height="3.27" fill="#ffffff"/>
<rect x="1389.77" y="508.43" width="4.88" height="3.27" fill="#ffffff"/>
<rect x="1397.26" y="508.43" width="4.69" height="3.27" fill="#ffffff"/>
<text x="1428.80" y="511.00" font-size="25" fill="#111" letter-spacing="-0.354">10760</text>
<rect x="1430.00" y="508.43" width="4.88" height="3.27" fill="#ffffff"/>
<rect x="1437.50" y="508.43" width="4.69" height="3.27" fill="#ffffff"/>
<text x="149.00" y="552.25" font-size="25" fill="#111" letter-spacing="0.207">35011</text>
<rect x="192.54" y="549.68" width="4.88" height="3.27" fill="#ffffff"/>
<rect x="200.03" y="549.68" width="4.69" height="3.27" fill="#ffffff"/>
<rect x="204.79" y="549.68" width="4.88" height="3.27" fill="#ffffff"/>
<rect x="212.28" y="549.68" width="4.69" height="3.27" fill="#ffffff"/>
<text x="314.00" y="552.25" font-size="25" fill="#111" letter-spacing="-1.475">AL</text>
<text x="529.50" y="552.25" font-size="25" fill="#111">Alabama</text>
<text x="694.60" y="552.25" font-size="25" fill="#111" letter-spacing="0.294">Alexander City</text>
<text x="922.20" y="552.25" font-size="25" fill="#111" letter-spacing="0.283">Alexander City, AL</text>
<text x="1428.80" y="552.25" font-size="25" fill="#111" letter-spacing="-0.354">10760</text>
<rect x="1430.00" y="549.68" width="4.88" height="3.27" fill="#ffffff"/>
<rect x="1437.50" y="549.68" width="4.69" height="3.27" fill="#ffffff"/>
<text x="149.00" y="593.50" font-size="25" fill="#111" letter-spacing="-0.079">35013</text>
<rect x="191.68" y="590.93" width="4.88" height="3.27" fill="#ffffff"/>
<rect x="199.17" y="590.93" width="4.69" height="3.27" fill="#ffffff"/>
<text x="314.00" y="593.50" font-size="25" fill="#111" letter-spacing="-1.475">AL</text>
<text x="529.50" y="593.50" font-size="25" fill="#111">Alabama</text>
<text x="694.60" y="593.50" font-size="25" fill="#111" letter-spacing="0.501">Allgood</text>
<text x="920.20" y="593.50" font-size="25" fill="#111" letter-spacing="0.305">Birmingham, AL</text>
<text x="1375.40" y="593.50" font-size="25" fill="#111" letter-spacing="-0.904">122</text>
<rect x="1376.60" y="590.93" width="4.88" height="3.27" fill="#ffffff"/>
<rect x="1384.10" y="590.93" width="4.69" height="3.27" fill="#ffffff"/>
<text x="1428.80" y="593.50" font-size="25" fill="#111" letter-spacing="0.271">13820</text>
<rect x="1430.00" y="590.93" width="4.88" height="3.27" fill="#ffffff"/>
<rect x="1437.50" y="590.93" width="4.69" height="3.27" fill="#ffffff"/>
<text x="149.00" y="634.75" font-size="25" fill="#111" letter-spacing="-0.329">35014</text>
<rect x="190.93" y="632.18" width="4.88" height="3.27" fill="#ffffff"/>
<rect x="198.42" y="632.18" width="4.69" height="3.27" fill="#ffffff"/>
<text x="314.00" y="634.75" font-size="25" fill="#111" letter-spacing="-1.475">AL</text>
<text x="529.50" y="634.75" font-size="25" fill="#111">Alabama</text>
<text x="694.60" y="634.75" font-size="25" fill="#111" letter-spacing="0.342">Alpine</text>
<text x="922.20" y="634.75" font-size="25" fill="#111" letter-spacing="0.365">Talladega-Sylacauga, AL</text>
<text x="1351.00" y="634.75" font-size="25" fill="#111" letter-spacing="0.436">3,353</text>
<text x="1430.30" y="634.75" font-size="25" fill="#111" letter-spacing="-0.104">45180</text>
<rect x="1459.10" y="632.18" width="4.88" height="3.27" fill="#ffffff"/>
<rect x="1466.60" y="632.18" width="4.69" height="3.27" fill="#ffffff"/>
<text x="149.00" y="676.00" font-size="25" fill="#111" letter-spacing="-0.329">35015</text>
<rect x="190.93" y="673.43" width="4.88" height="3.27" fill="#ffffff"/>
<rect x="198.42" y="673.43" width="4.69" height="3.27" fill="#ffffff"/>
<text x="314.00" y="676.00" font-size="25" fill="#111" letter-spacing="-1.475">AL</text>
<text x="529.50" y="676.00" font-size="25" fill="#111">Alabama</text>
<text x="694.60" y="676.00" font-size="25" fill="#111" letter-spacing="0.455">Alton</text>
<text x="920.20" y="676.00" font-size="25" fill="#111" letter-spacing="0.305">Birmingham, AL</text>
<text x="1428.80" y="676.00" font-size="25" fill="#111" letter-spacing="0.271">13820</text>
<rect x="1430.00" y="673.43" width="4.88" height="3.27" fill="#ffffff"/>
<rect x="1437.50" y="673.43" width="4.69" height="3.27" fill="#ffffff"/>
<text x="149.00" y="717.25" font-size="25" fill="#111" letter-spacing="-0.079">35016</text>
<rect x="191.68" y="714.68" width="4.88" height="3.27" fill="#ffffff"/>
<rect x="199.17" y="714.68" width="4.69" height="3.27" fill="#ffffff"/>
<text x="314.00" y="717.25" font-size="25" fill="#111" letter-spacing="-1.475">AL</text>
<text x="529.50" y="717.25" font-size="25" fill="#111">Alabama</text>
<text x="694.60" y="717.25" font-size="25" fill="#111" letter-spacing="0.399">Arab</text>
<text x="922.20" y="717.25" font-size="25" fill="#111" letter-spacing="0.347">Albertville, AL</text>
<text x="1341.30" y="717.25" font-size="25" fill="#111" letter-spacing="-0.492">17,435</text>
<rect x="1342.50" y="714.68" width="4.88" height="3.27" fill="#ffffff"/>
<rect x="1350.00" y="714.68" width="4.69" height="3.27" fill="#ffffff"/>
<text x="1428.80" y="717.25" font-size="25" fill="#111" letter-spacing="-0.354">10700</text>
<rect x="1430.00" y="714.68" width="4.88" height="3.27" fill="#ffffff"/>
<rect x="1437.50" y="714.68" width="4.69" height="3.27" fill="#ffffff"/>
<text x="149.00" y="758.50" font-size="25" fill="#111" letter-spacing="-0.079">35019</text>
<rect x="191.68" y="755.93" width="4.88" height="3.27" fill="#ffffff"/>
<rect x="199.17" y="755.93" width="4.69" height="3.27" fill="#ffffff"/>
<text x="314.00" y="758.50" font-size="25" fill="#111" letter-spacing="-1.475">AL</text>
<text x="529.50" y="758.50" font-size="25" fill="#111">Alabama</text>
<text x="692.60" y="758.50" font-size="25" fill="#111" letter-spacing="0.482">Baileyton</text>
<text x="921.20" y="758.50" font-size="25" fill="#111" letter-spacing="0.043">Cullman, AL</text>
<text x="1348.80" y="758.50" font-size="25" fill="#111" letter-spacing="0.986">2,497</text>
<text x="1428.80" y="758.50" font-size="25" fill="#111" letter-spacing="0.271">18980</text>
<rect x="1430.00" y="755.93" width="4.88" height="3.27" fill="#ffffff"/>
<rect x="1437.50" y="755.93" width="4.69" height="3.27" fill="#ffffff"/>
<text x="149.00" y="799.75" font-size="25" fill="#111" letter-spacing="1.146">35020</text>
<text x="314.00" y="799.75" font-size="25" fill="#111" letter-spacing="-1.475">AL</text>
<text x="529.50" y="799.75" font-size="25" fill="#111">Alabama</text>
<text x="692.60" y="799.75" font-size="25" fill="#111" letter-spacing="0.441">Bessemer</text>
<text x="920.20" y="799.75" font-size="25" fill="#111" letter-spacing="0.305">Birmingham, AL</text>
<text x="1334.80" y="799.75" font-size="25" fill="#111" letter-spacing="0.808">25,308</text>
<text x="1428.80" y="799.75" font-size="25" fill="#111" letter-spacing="0.271">13820</text>
<rect x="1430.00" y="797.18" width="4.88" height="3.27" fill="#ffffff"/>
<rect x="1437.50" y="797.18" width="4.69" height="3.27" fill="#ffffff"/>
<text x="149.00" y="841.00" font-size="25" fill="#111" letter-spacing="0.968">35021</text>
<rect x="209.69" y="838.43" width="4.88" height="3.27" fill="#ffffff"/>
<rect x="217.18" y="838.43" width="4.69" height="3.27" fill="#ffffff"/>
<text x="314.00" y="841.00" font-size="25" fill="#111" letter-spacing="-1.475">AL</text>
<text x="529.50" y="841.00" font-size="25" fill="#111">Alabama</text>
<text x="692.60" y="841.00" font-size="25" fill="#111" letter-spacing="0.441">Bessemer</text>
<text x="920.20" y="841.00" font-size="25" fill="#111" letter-spacing="0.305">Birmingham, AL</text>
<text x="1428.80" y="841.00" font-size="25" fill="#111" letter-spacing="0.271">13820</text>
<rect x="1430.00" y="838.43" width="4.88" height="3.27" fill="#ffffff"/>
<rect x="1437.50" y="838.43" width="4.69" height="3.27" fill="#ffffff"/>
<text x="149.00" y="882.25" font-size="25" fill="#111" letter-spacing="1.146">35022</text>
<text x="314.00" y="882.25" font-size="25" fill="#111" letter-spacing="-1.475">AL</text>
<text x="529.50" y="882.25" font-size="25" fill="#111">Alabama</text>
<text x="692.60" y="882.25" font-size="25" fill="#111" letter-spacing="0.441">Bessemer</text>
<text x="920.20" y="882.25" font-size="25" fill="#111" letter-spacing="0.305">Birmingham, AL</text>
<text x="1334.80" y="882.25" font-size="25" fill="#111" letter-spacing="0.808">23,989</text>
<text x="1428.80" y="882.25" font-size="25" fill="#111" letter-spacing="0.271">13820</text>
<rect x="1430.00" y="879.68" width="4.88" height="3.27" fill="#ffffff"/>
<rect x="1437.50" y="879.68" width="4.69" height="3.27" fill="#ffffff"/>
<text x="149.00" y="923.50" font-size="25" fill="#111" letter-spacing="1.146" clip-path="url(#grid16)">35023</text>
<text x="314.00" y="923.50" font-size="25" fill="#111" letter-spacing="-1.475" clip-path="url(#grid16)">AL</text>
<text x="529.50" y="923.50" font-size="25" fill="#111" clip-path="url(#grid16)">Alabama</text>
<text x="692.60" y="923.50" font-size="25" fill="#111" letter-spacing="0.441" clip-path="url(#grid16)">Bessemer</text>
<text x="920.20" y="923.50" font-size="25" fill="#111" letter-spacing="0.305" clip-path="url(#grid16)">Birmingham, AL</text>
<text x="1341.40" y="923.50" font-size="25" fill="#111" letter-spacing="0.325" clip-path="url(#grid16)">25,691</text>
<rect x="1406.79" y="920.93" width="4.88" height="3.27" fill="#ffffff" clip-path="url(#grid16)"/>
<rect x="1414.28" y="920.93" width="4.69" height="3.27" fill="#ffffff" clip-path="url(#grid16)"/>
<text x="1428.80" y="923.50" font-size="25" fill="#111" letter-spacing="0.271" clip-path="url(#grid16)">13820</text>
<rect x="1430.00" y="920.93" width="4.88" height="3.27" fill="#ffffff" clip-path="url(#grid16)"/>
<rect x="1437.50" y="920.93" width="4.69" height="3.27" fill="#ffffff" clip-path="url(#grid16)"/>
<text x="166.00" y="979.50" font-size="24" fill="#9c9c9c" letter-spacing="0.892">Metro to ZIP Code</text>
<text x="439.90" y="979.50" font-size="24" fill="#9c9c9c" letter-spacing="1.046">MAP - Metro to State</text>
<text x="747.80" y="979.50" font-size="24" fill="#1e1e1e" letter-spacing="0.931">MAP - ZIP to Town, Metro, State</text>
<text x="1184.50" y="979.50" font-size="24" fill="#9c9c9c" letter-spacing="1.260">MAP - Town to Metro</text>
<text x="1495.40" y="979.50" font-size="24" fill="#9c9c9c" letter-spacing="0.550" clip-path="url(#tabs)">Overall U.S. Demographics</text>
<rect x="0" y="932.8" width="161.5" height="71.2" fill="#fafafa" />
<rect x="161.2" y="932.8" width="10.5" height="71.2" fill="url(#shR)" />
<line x1="25.8" y1="970.7" x2="47.4" y2="970.7" stroke="#242424" stroke-width="2.5" stroke-linecap="butt" />
<line x1="36.6" y1="960" x2="36.6" y2="981.4" stroke="#242424" stroke-width="2.5" stroke-linecap="butt" />
<line x1="106" y1="962.8" x2="133.6" y2="962.8" stroke="#242424" stroke-width="2.4" stroke-linecap="butt" />
<line x1="106" y1="970.6" x2="133.6" y2="970.6" stroke="#242424" stroke-width="2.4" stroke-linecap="butt" />
<line x1="106" y1="978.4" x2="133.6" y2="978.4" stroke="#242424" stroke-width="2.4" stroke-linecap="butt" />
<rect x="1742.9" y="932.8" width="156.1" height="71.2" fill="#fafafa" />
<rect x="1731.2" y="932.8" width="11.7" height="71.2" fill="url(#shL)" />
<path d="M1786,960.6 L1774.6,970.6 L1786,980.6" stroke="#141414" stroke-width="2.9" fill="none" stroke-linecap="round" stroke-linejoin="round" />
<path d="M1826.4,960.6 L1837.8,970.6 L1826.4,980.6" stroke="#141414" stroke-width="2.9" fill="none" stroke-linecap="round" stroke-linejoin="round" /></svg>
</body></html>
